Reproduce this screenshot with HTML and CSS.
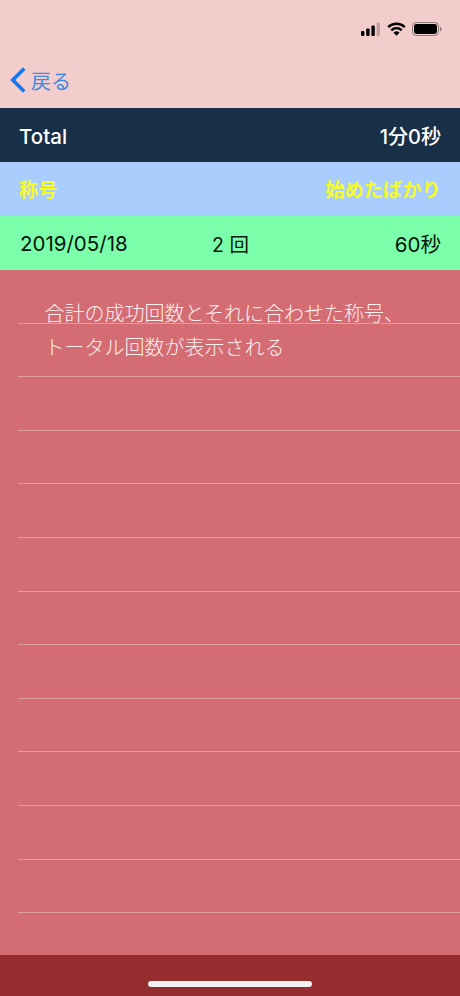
FILE: index.html
```html
<!DOCTYPE html>
<html lang="ja">
<head>
  <meta charset="UTF-8">
  <meta name="viewport" content="width=device-width, initial-scale=1.0">
  <title>Total</title>
  <link rel="stylesheet" href="styles.css">
</head>
<body>
  <header class="top">
    <div class="status-bar">
      <svg class="signal" width="20" height="14" viewBox="0 0 20 14">
        <rect x="0" y="9" width="3.4" height="5" rx="1" fill="#000"/>
        <rect x="5.2" y="6.5" width="3.4" height="7.5" rx="1" fill="#000"/>
        <rect x="10.4" y="3.5" width="3.4" height="10.5" rx="1" fill="#000"/>
        <rect x="15.6" y="0.5" width="3.4" height="13.5" rx="1" fill="#000" opacity="0.2"/>
      </svg>
      <svg class="wifi" width="19" height="14" viewBox="0 0 19 14">
        <path d="M1.2 5.2a11.8 11.8 0 0 1 16.6 0" fill="none" stroke="#000" stroke-width="2.4"/>
        <path d="M4.3 8.3a7.4 7.4 0 0 1 10.4 0" fill="none" stroke="#000" stroke-width="2.4"/>
        <path d="M9.5 13.8l-3-3.1a4.3 4.3 0 0 1 6 0z" fill="#000"/>
      </svg>
      <svg class="battery" width="30" height="14" viewBox="0 0 30 14">
        <rect x="0.5" y="0.5" width="26" height="13" rx="3.6" fill="none" stroke="#000" stroke-opacity="0.4"/>
        <rect x="2" y="2" width="23" height="10" rx="2.4" fill="#000"/>
        <path d="M28 4.8c1 .3 1.6 1.1 1.6 2.2s-.6 1.9-1.6 2.2z" fill="#000" fill-opacity="0.4"/>
      </svg>
    </div>
    <nav class="nav-bar">
      <a class="back" href="#">
        <svg width="16" height="26" viewBox="0 0 16 26">
          <path d="M14.2 1.5L2.8 13l11.4 11.5" fill="none" stroke="#1479f0" stroke-width="3.6"/>
        </svg>
        <span>戻る</span>
      </a>
    </nav>
  </header>

  <div class="row row-total">
    <span class="total-label">Total</span>
    <span>1分0秒</span>
  </div>
  <div class="row row-title">
    <span>称号</span>
    <span>始めたばかり</span>
  </div>
  <div class="row row-record">
    <span>2019/05/18</span>
    <span class="count">2 回</span>
    <span class="time">60秒</span>
  </div>

  <main class="list">
    <div class="cell"></div>
    <div class="cell"></div>
    <div class="cell"></div>
    <div class="cell"></div>
    <div class="cell"></div>
    <div class="cell"></div>
    <div class="cell"></div>
    <div class="cell"></div>
    <div class="cell"></div>
    <div class="cell"></div>
    <div class="cell"></div>
    <div class="cell"></div>
    <p class="note">合計の成功回数とそれに合わせた称号、<br>トータル回数が表示される</p>
  </main>

  <footer class="bottom">
    <div class="home-bar"></div>
  </footer>
</body>
</html>
```

FILE: styles.css
```css
* {
  box-sizing: border-box;
}
html, body {
  margin: 0;
  height: 100%;
}
body {
  display: flex;
  flex-direction: column;
  height: 996px;
  overflow: hidden;
  font-family: Inter, "Noto Sans CJK JP", sans-serif;
  background: #d46c73;
}
.top {
  height: 108px;
  background: #f2cdcb;
}
.status-bar {
  height: 54px;
  padding: 22px 18px 0 0;
  display: flex;
  justify-content: flex-end;
  align-items: flex-start;
  gap: 6px;
}
.nav-bar {
  height: 52px;
  padding: 0 0 0 10px;
  display: flex;
  align-items: center;
}
.back {
  display: flex;
  align-items: center;
  gap: 5px;
  color: #3f8ae6;
  font-size: 20px;
  font-weight: 400;
  text-decoration: none;
}
.row {
  height: 54px;
  padding: 0 19px 0 20px;
  display: flex;
  justify-content: space-between;
  align-items: center;
  font-size: 20px;
}
.row-total {
  background: #182f48;
  color: #fff;
  font-weight: 500;
  padding-left: 19px;
}
.total-label {
  font-size: 20.5px;
  padding-top: 2px;
}
.row-title {
  background: #a9cdfd;
  color: #f6fb28;
  font-weight: 700;
  font-size: 19.2px;
  padding-left: 19px;
}
.row-record {
  display: grid;
  grid-template-columns: 1fr auto 1fr;
  background: #7bffaa;
  color: #06140c;
  font-size: 20.5px;
}
.count {
  font-size: 19.5px;
}
.time {
  text-align: right;
}
.list {
  position: relative;
  flex: 1;
}
.cell {
  height: 53.62px;
  margin-left: 18px;
  border-bottom: 1px solid #e09da0;
}
.note {
  position: absolute;
  top: 27px;
  left: 44.5px;
  margin: 0;
  color: #fdf0f0;
  font-size: 20px;
  font-weight: 300;
  line-height: 34px;
}
.bottom {
  height: 41px;
  position: relative;
  background: #952d2f;
}
.home-bar {
  position: absolute;
  left: 148px;
  top: 26px;
  width: 164px;
  height: 6px;
  border-radius: 3px;
  background: #f5f2f2;
}
```
